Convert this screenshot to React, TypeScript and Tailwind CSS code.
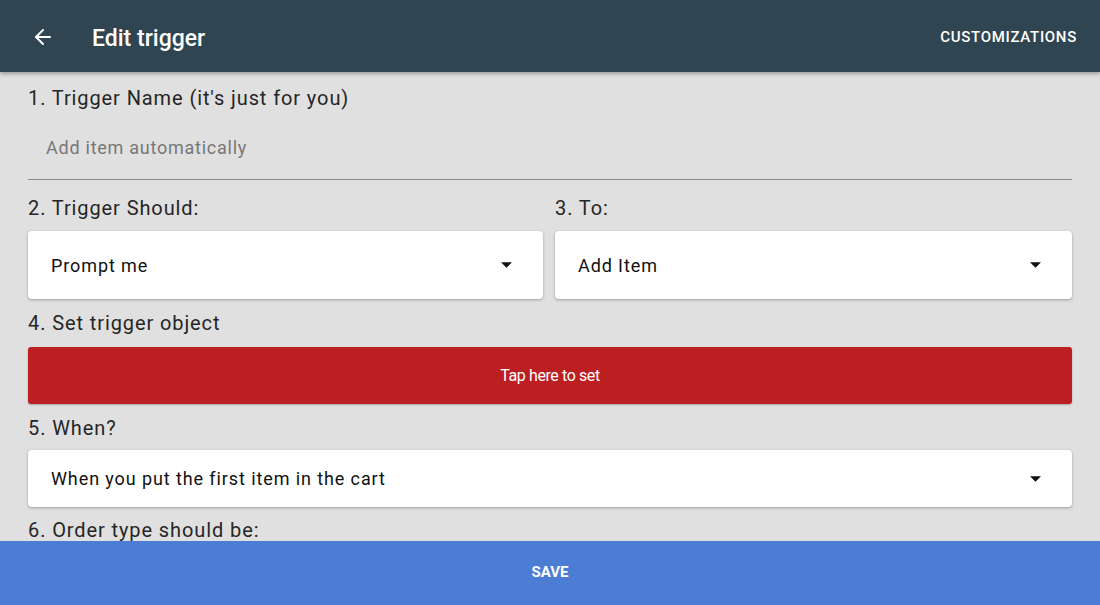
import { ArrowLeft } from 'lucide-react'

const FONT = { fontFamily: 'Roboto, "Noto Sans", sans-serif' }

function Caret() {
  return (
    <svg width="11" height="6" viewBox="0 0 10 5" className="shrink-0">
      <path d="M0 0 L10 0 L5 5 Z" fill="#111" />
    </svg>
  )
}

function Select({ value, tall }: { value: string; tall?: boolean }) {
  return (
    <div
      className={`flex items-center justify-between rounded-[4px] bg-white pl-[23px] pr-[31px] shadow-[0_1px_3px_rgba(0,0,0,0.3)] ${
        tall ? 'h-[68px]' : 'h-[57px]'
      }`}
    >
      <span className="text-[18px] tracking-[0.9px] text-[#111]">{value}</span>
      <Caret />
    </div>
  )
}

function Label({ children }: { children: React.ReactNode }) {
  return <div className="text-[20px] leading-[24px] tracking-[0.9px] text-[#262626]">{children}</div>
}

export default function App() {
  return (
    <div className="flex h-[605px] w-[1100px] flex-col overflow-hidden bg-[#e0e0e0]" style={FONT}>
      {/* top bar */}
      <header className="relative z-10 flex h-[72px] shrink-0 items-center bg-[#2f4551] pl-[31px] pr-[23px] text-white shadow-[0_2px_4px_rgba(0,0,0,0.3)]">
        <ArrowLeft size={24} strokeWidth={2} className="mt-[2px]" />
        <h1 className="ml-[37px] mt-[6px] text-[23px] font-medium">Edit trigger</h1>
        <button className="ml-auto mt-[2px] text-[15px] font-medium tracking-[0.7px]">CUSTOMIZATIONS</button>
      </header>

      {/* form */}
      <main className="min-h-0 flex-1 overflow-hidden px-[28px] pt-[14px]">
        <Label>1. Trigger Name (it's just for you)</Label>
        <div className="mt-[26px] border-b border-[#8a8a8a] pb-[19px] pl-[18px] text-[18px] leading-[24px] tracking-[0.75px] text-[#777]">
          Add item automatically
        </div>

        <div className="mt-[16px] grid grid-cols-[515px_1fr] gap-x-[12px]">
          <div>
            <Label>2. Trigger Should:</Label>
            <div className="mt-[11px]">
              <Select value="Prompt me" tall />
            </div>
          </div>
          <div>
            <Label>3. To:</Label>
            <div className="mt-[11px]">
              <Select value="Add Item" tall />
            </div>
          </div>
        </div>

        <div className="mt-[12px]">
          <Label>4. Set trigger object</Label>
        </div>
        <button className="mt-[12px] flex h-[57px] w-full items-center justify-center rounded-[3px] bg-[#bb1f22] text-[16px] tracking-[-0.4px] text-white shadow-[0_1px_2px_rgba(0,0,0,0.25)]">
          Tap here to set
        </button>

        <div className="mt-[12px]">
          <Label>5. When?</Label>
        </div>
        <div className="mt-[10px]">
          <Select value="When you put the first item in the cart" />
        </div>

        <div className="mt-[11px]">
          <Label>6. Order type should be:</Label>
        </div>
      </main>

      {/* save bar */}
      <button className="flex h-[64px] shrink-0 items-center justify-center bg-[#4c7dd4] pb-[2px] text-[15px] font-bold text-white">
        SAVE
      </button>
    </div>
  )
}
